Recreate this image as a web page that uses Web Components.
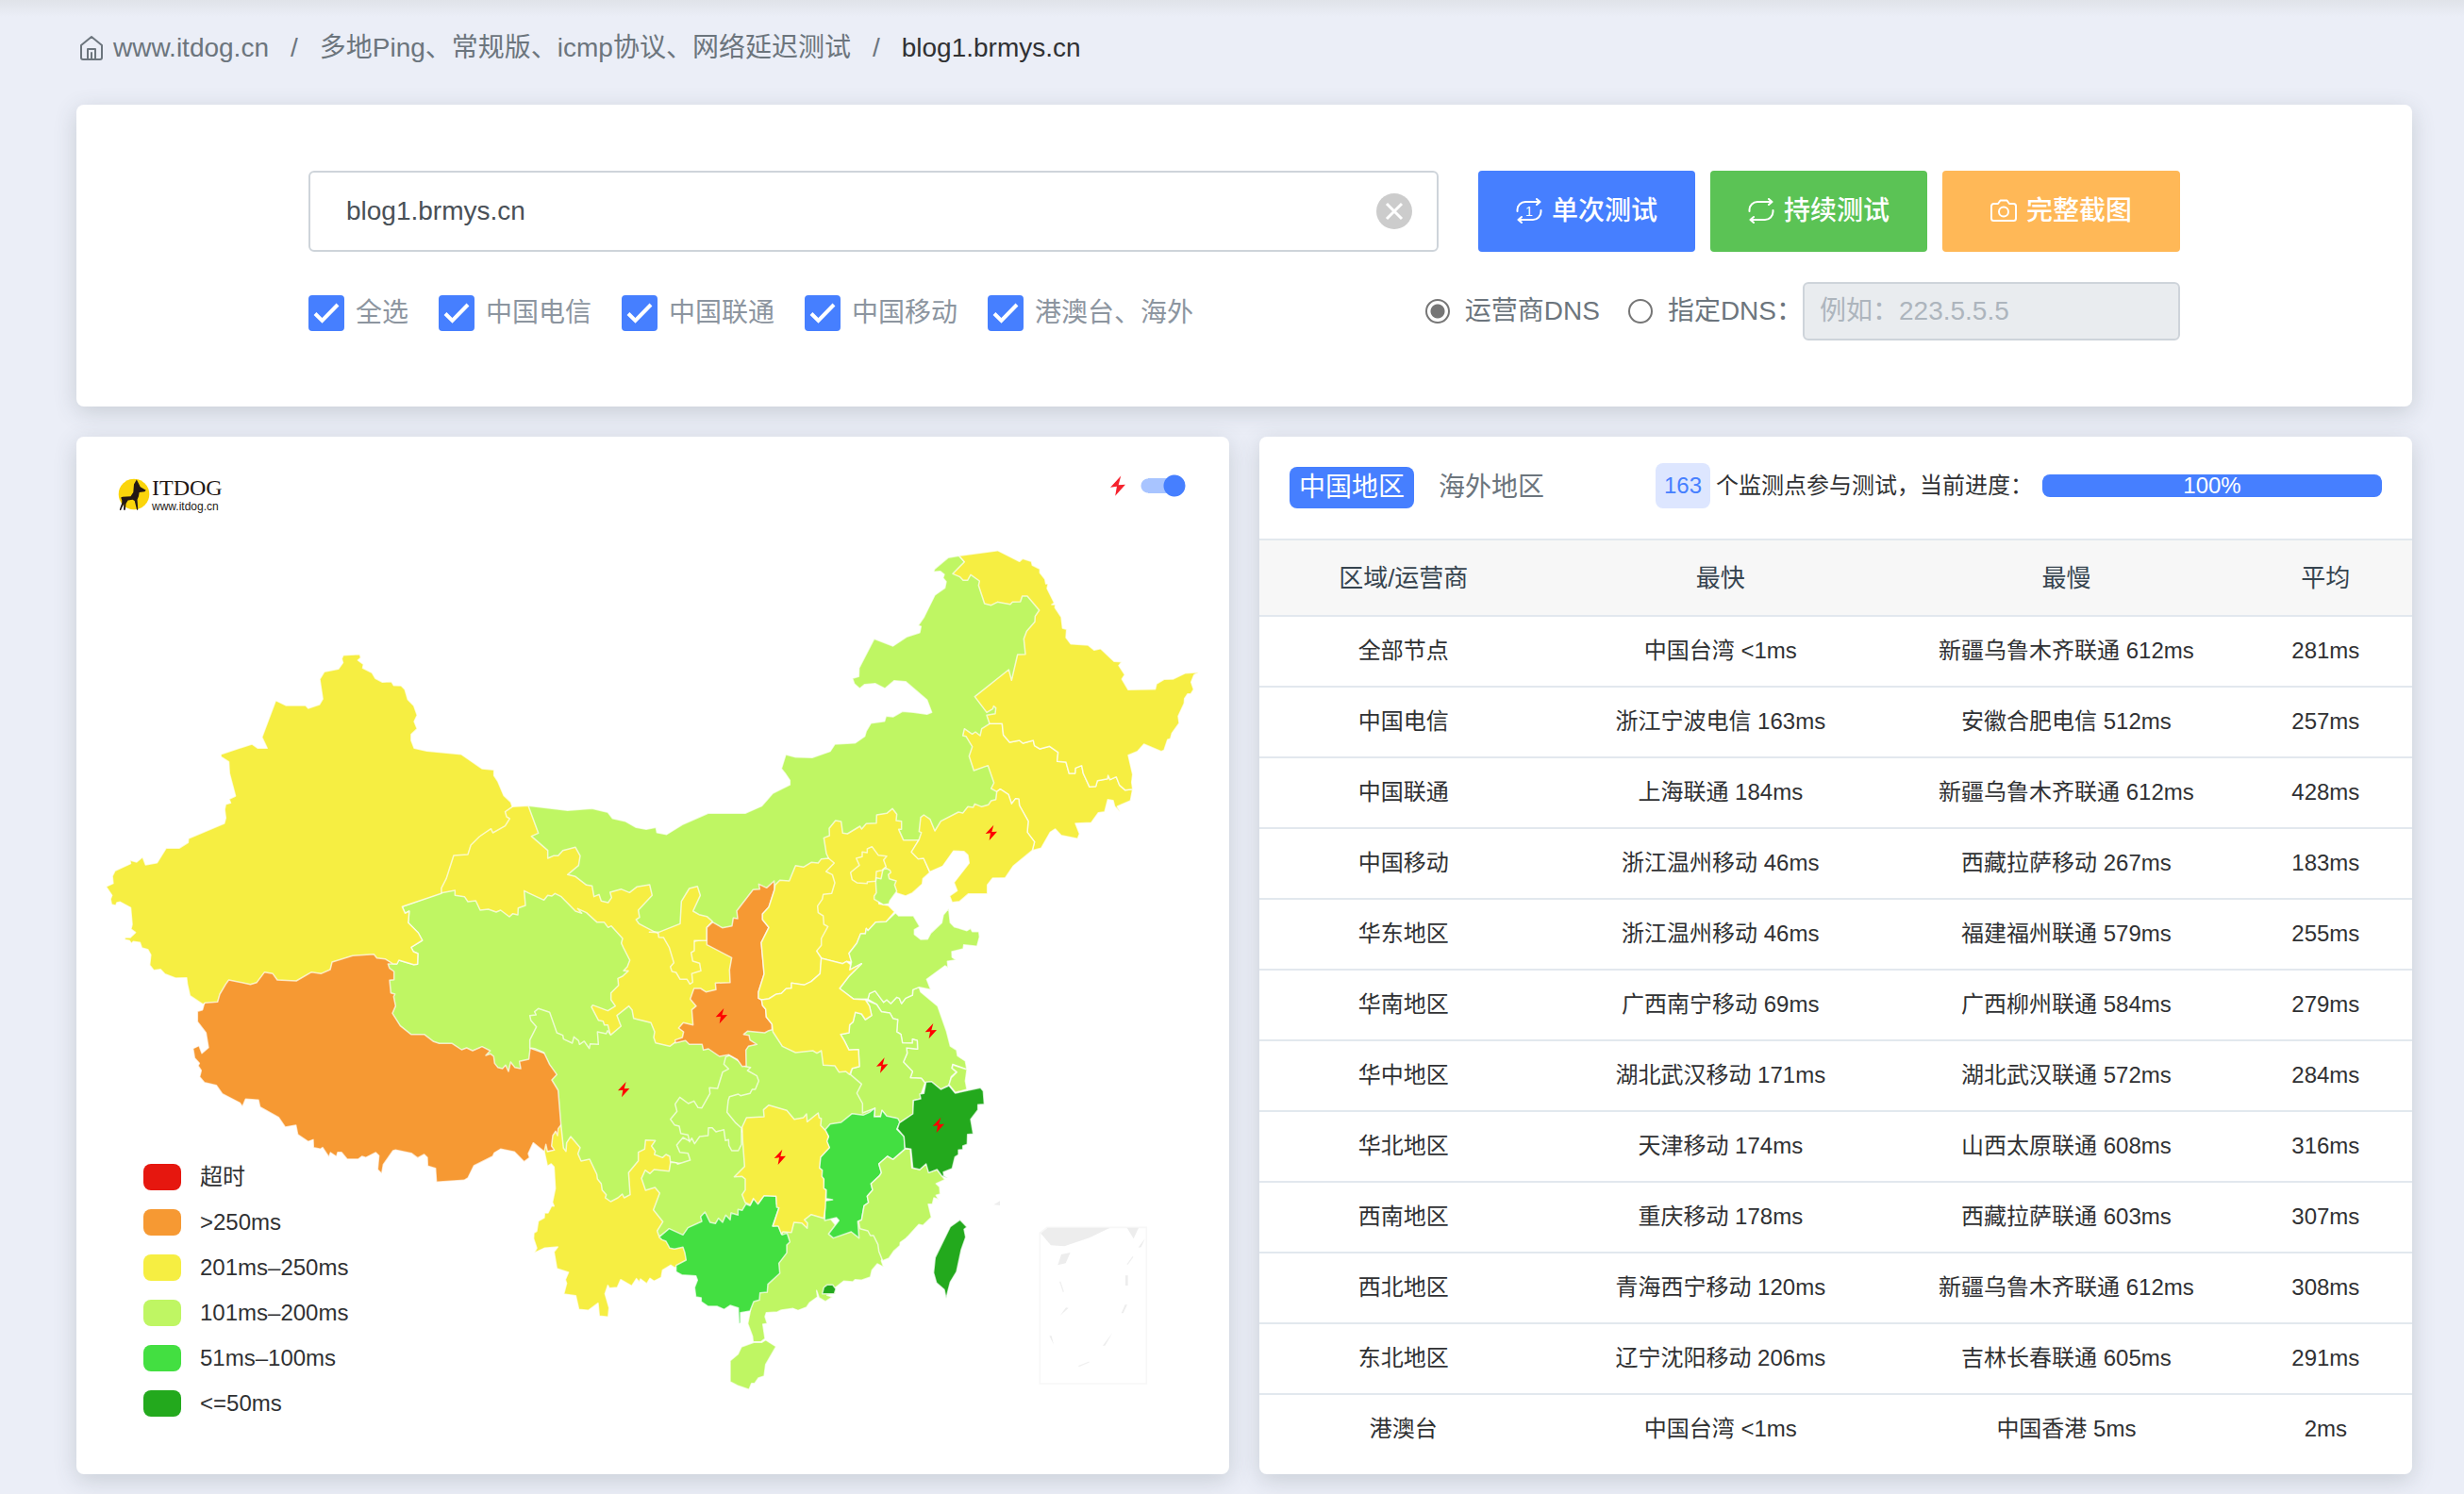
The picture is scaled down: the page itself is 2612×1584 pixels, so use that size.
<!DOCTYPE html>
<html lang="zh-CN">
<head>
<meta charset="utf-8">
<meta name="viewport" content="width=device-width, initial-scale=1">
<title>多地Ping - ITDOG</title>
<style>
    * { box-sizing: border-box; }
    body {
        margin: 0;
        min-height: 100vh;
        background: #ebeef7 linear-gradient(#e0e3e9, #ebeef7) no-repeat 0 0 / 100% 18px;
        font: 24px/32px "Liberation Sans", "Noto Sans CJK SC", sans-serif;
        color: #303133;
        --primary: #467fff;
        --success: #5bc355;
        --warning: #ffb857;
        --muted: #6c757d;
        --line: #e2e8ee;
    }
</style>
</head>
<body>
<ping-page></ping-page>

<script>
const base = `*, :after, :before { box-sizing: border-box; }`;

class UiCard extends HTMLElement {
    connectedCallback() {
        this.attachShadow({ mode: 'open' }).innerHTML = `
            <style>
                ${base}
                :host {
                    display: block;
                    background: #fff;
                    border-radius: 8px;
                    box-shadow: 0 6px 24px rgba(60, 75, 80, 0.2);
                    overflow: hidden;
                }
            </style>
            <slot></slot>`;
    }
}
customElements.define('ui-card', UiCard);

class BreadCrumb extends HTMLElement {
    connectedCallback() {
        this.attachShadow({ mode: 'open' }).innerHTML = `
            <style>
                ${base}
                :host { display: block; font-size: 28px; line-height: 40px; color: var(--muted); }
                ol { display: flex; list-style: none; margin: 0; padding: 0; }
                li { display: flex; align-items: center; }
                li + li::before { content: "/"; padding: 0 23px; color: var(--muted); }
                a { color: inherit; text-decoration: none; display: flex; align-items: center; gap: 10px; }
                svg { width: 26px; height: 28px; fill: none; stroke: currentColor; stroke-width: 2; stroke-linejoin: round; stroke-linecap: round; margin-left: 3px; }
                .active { color: #303133; }
            </style>
            <nav><ol>
                <li><a href="#"><svg viewBox="0 0 26 28"><path d="M2 11 13 2l11 9v13a2 2 0 0 1-2 2H4a2 2 0 0 1-2-2z M9 26V15h8v11 M13 19v7"/></svg>www.itdog.cn</a></li>
                <li><a href="#">多地Ping、常规版、icmp协议、网络延迟测试</a></li>
                <li class="active">blog1.brmys.cn</li>
            </ol></nav>`;
    }
}
customElements.define('bread-crumb', BreadCrumb);

class CheckField extends HTMLElement {
    connectedCallback() {
        this.attachShadow({ mode: 'open' }).innerHTML = `
            <style>
                ${base}
                :host { display: block; }
                label { display: flex; align-items: center; gap: 12px; color: #8c959f; }
                input {
                    appearance: none;
                    width: 38px;
                    height: 38px;
                    margin: 0;
                    border: 2px solid #ced4da;
                    border-radius: 4px;
                }
                .box { display: grid; }
                .box > * { grid-area: 1 / 1; }
                input:checked { background: var(--primary); border-color: var(--primary); }
                svg { width: 38px; height: 38px; fill: none; stroke: #fff; stroke-width: 4; pointer-events: none; }
            </style>
            <label>
                <span class="box">
                    <input type="checkbox" checked>
                    <svg viewBox="0 0 38 38"><path d="M7 19.500 14.500 27 31 10"/></svg>
                </span>
                <slot></slot>
            </label>`;
    }
}
customElements.define('check-field', CheckField);

const icons = {
    once: `<path d="M1.500 14v-1.500a8.500 8.500 0 0 1 8.500-8.500H25 M22 1l3.500 3L22 7 M26.500 13v1.500A8.500 8.500 0 0 1 18 23H3 M6 20l-3.500 3L6 26"/><text x="10" y="19" font-size="14" fill="#fff" stroke="none">1</text>`,
    loop: `<path d="M1.500 14v-1.500a8.500 8.500 0 0 1 8.500-8.500H25 M22 1l3.500 3L22 7 M26.500 13v1.500A8.500 8.500 0 0 1 18 23H3 M6 20l-3.500 3L6 26"/>`,
    camera: `<path d="M3.500 6H8l2.500-3.500h7L20 6h4.500A2.500 2.500 0 0 1 27 8.500v13a2.500 2.500 0 0 1-2.500 2.500h-21A2.500 2.500 0 0 1 1 21.500v-13A2.500 2.500 0 0 1 3.500 6z"/><circle cx="14" cy="14.500" r="5"/>`
};

class ActionButton extends HTMLElement {
    connectedCallback() {
        this.attachShadow({ mode: 'open' }).innerHTML = `
            <style>
                ${base}
                :host { display: block; }
                :host([wide]) button { padding: 0 51px; }
                button {
                    display: flex;
                    align-items: center;
                    gap: 10px;
                    height: 86px;
                    padding: 0 40px;
                    border: 0;
                    border-radius: 4px;
                    background: var(--tone);
                    color: #fff;
                    font: inherit;
                    font-size: 28px;
                    font-weight: 500;
                    white-space: nowrap;
                    cursor: pointer;
                }
                svg { width: 28px; height: 28px; fill: none; stroke: #fff; stroke-width: 2; stroke-linecap: round; stroke-linejoin: round; }
            </style>
            <button type="button"><svg viewBox="0 0 28 28">${icons[this.getAttribute('icon')]}</svg><slot></slot></button>`;
    }
}
customElements.define('action-button', ActionButton);

class SearchPanel extends HTMLElement {
    connectedCallback() {
        this.attachShadow({ mode: 'open' }).innerHTML = `
            <style>
                ${base}
                :host { display: block; padding: 70px 246px; font-size: 28px; line-height: 40px; }
                form { display: flex; flex-direction: column; gap: 32px; }
                .row { display: flex; align-items: center; justify-content: space-between; }
                .host { flex: 1; position: relative; margin-right: 42px; }
                .host input {
                    width: 100%;
                    height: 86px;
                    padding: 0 80px 0 38px;
                    border: 2px solid #ced4da;
                    border-radius: 6px;
                    font: inherit;
                    color: #495057;
                    display: block;
                }
                .clear {
                    position: absolute;
                    right: 28px;
                    top: 24px;
                    width: 38px;
                    height: 38px;
                    border: 0;
                    padding: 0;
                    border-radius: 50%;
                    background: #ccc;
                }
                .clear svg { display: block; width: 38px; height: 38px; stroke: #fff; stroke-width: 3; }
                .buttons { display: flex; gap: 16px; }
                .success { --tone: var(--success); }
                .primary { --tone: var(--primary); }
                .warning { --tone: var(--warning); }
                .checks { display: flex; gap: 32px; padding-top: 4px; }
                .dns { display: flex; align-items: center; color: var(--muted); }
                .dns label { display: flex; align-items: center; gap: 16px; }
                .dns label + label { margin-left: 30px; }
                input[type=radio] {
                    appearance: none;
                    width: 26px;
                    height: 26px;
                    margin: 0;
                    border: 2px solid #767676;
                    border-radius: 50%;
                }
                input[type=radio]:checked { background: radial-gradient(circle, #767676 7px, #fff 8px); }
                .server {
                    width: 400px;
                    height: 62px;
                    padding: 0 16px;
                    border: 2px solid #ced4da;
                    border-radius: 6px;
                    background: #e9ecef;
                    font: inherit;
                }
                .server::placeholder { color: #adb5bd; }
            </style>
            <form>
                <div class="row">
                    <div class="host">
                        <input type="text" aria-label="域名" value="blog1.brmys.cn">
                        <button class="clear" type="button" aria-label="清空"><svg viewBox="0 0 38 38"><path d="M11 11l16 16M27 11L11 27"/></svg></button>
                    </div>
                    <div class="buttons">
                        <action-button class="primary" icon="once">单次测试</action-button>
                        <action-button class="success" icon="loop">持续测试</action-button>
                        <action-button class="warning" icon="camera" wide>完整截图</action-button>
                    </div>
                </div>
                <div class="row">
                    <div class="checks">
                        <check-field>全选</check-field>
                        <check-field>中国电信</check-field>
                        <check-field>中国联通</check-field>
                        <check-field>中国移动</check-field>
                        <check-field>港澳台、海外</check-field>
                    </div>
                    <div class="dns">
                        <label><input type="radio" name="dns" checked>运营商DNS</label>
                        <label><input type="radio" name="dns">指定DNS：</label>
                        <input class="server" type="text" aria-label="指定DNS" placeholder="例如：223.5.5.5" disabled>
                    </div>
                </div>
            </form>`;
    }
}
customElements.define('search-panel', SearchPanel);

// latency levels, slowest first
const levels = {
    timeout: ['#e6170f', '超时'],
    slow: ['#f69933', '>250ms'],
    fair: ['#f6ee42', '201ms–250ms'],
    good: ['#bff663', '101ms–200ms'],
    fast: ['#43df41', '51ms–100ms'],
    best: ['#23a91d', '<=50ms']
};

// each map sheet has its own origin and scale; provinces are listed per sheet
const sheets = {
    mid: 'translate(560 820) scale(.33333)',
    west: 'translate(80 660) scale(.39541 .33333)',
    north: 'translate(880 560) scale(.33333)',
    south: 'translate(700 980) scale(.33333)',
    tibet: 'translate(200 1040) scale(.33333)'
};

// drawn in order, later ones cover the shared borders
const provinces = [
    ['内蒙古', 'mid', 'good', '0,103 125,118 203,112 253,124 268,143 308,152 343,172 375,178 406,172 409,188 440,194 490,163 572,127 690,127 742,104 778,63 832,36 832,22 817,0 805,-15 819,-60 850,-52 903,-50 960,-70 975,-93 1040,-97 1070,-118 1075,-135 1090,-160 1133,-166 1138,-182 1160,-180 1190,-197 1225,-194 1268,-188 1283,-194 1268,-234 1200,-292 1164,-295 1134,-270 1103,-286 1070,-283 1054,-270 1037,-285 1031,-302 1051,-308 1052,-335 1100,-428 1160,-405 1203,-434 1245,-448 1249,-467 1240,-470 1259,-498 1293,-567 1325,-590 1329,-610 1319,-622 1323,-633 1310,-643 1289,-641 1292,-650 1335,-686 1370,-692 1400,-660 1460,-600 1600,-600 1660,-520 1620,-380 1580,-300 1500,-260 1500,-180 1520,-140 1480,-40 1520,50 1500,90 1380,180 1250,260 1100,200 1000,260 900,360 790,420 700,560 560,560 400,540 250,480 60,330 -20,200'],
    ['西藏', 'tibet', 'slow', '50,70 44,92 28,97 28,130 55,165 63,212 42,230 33,206 14,215 19,245 34,262 30,270 40,285 35,305 50,323 88,332 107,359 163,388 171,400 181,376 222,379 227,401 286,434 307,465 341,459 347,489 380,511 396,505 397,530 419,535 426,530 446,560 451,546 470,559 474,545 486,545 504,567 539,567 551,558 563,562 595,546 605,556 601,600 614,613 619,584 650,540 658,538 708,548 728,563 749,552 759,562 760,589 785,596 788,640 876,634 888,627 907,588 967,558 972,547 992,535 1036,544 1067,575 1084,562 1080,549 1096,515 1131,543 1164,540 1200,460 1200,300 1100,180 900,150 700,100 680,-60 600,-110 300,-60 100,-20'],
    ['云南', 'tibet', 'fair', '1131,543 1136,520 1141,543 1163,538 1154,525 1158,492 1167,478 1173,492 1175,470 1184,458 1200,440 1300,500 1500,480 1560,560 1600,640 1600,900 1545,912 1533,904 1507,920 1503,943 1480,955 1467,946 1457,963 1437,948 1433,958 1424,947 1409,970 1374,950 1363,975 1338,977 1333,968 1324,995 1337,1040 1334,1069 1306,1066 1302,1025 1271,1048 1241,1045 1231,1001 1193,996 1202,962 1198,950 1208,927 1171,915 1162,862 1174,846 1131,850 1099,865 1107,850 1097,820 1098,802 1107,796 1112,764 1131,753 1132,738 1143,738 1154,716 1162,716 1157,704 1166,660 1162,592 1153,582 1141,589'],
    ['甘肃', 'mid', 'fair', '0,103 32,190 10,200 62,245 62,270 80,262 95,262 110,245 150,235 165,262 160,293 125,322 150,328 185,355 203,358 209,392 225,385 232,406 254,411 265,395 260,378 295,368 322,379 345,361 386,354 394,388 350,435 354,458 343,465 352,478 398,502 500,540 600,520 700,600 700,660 600,700 560,740 530,820 470,870 440,900 250,880 150,740 200,600 100,480 -60,520 -300,500 -330,380 -300,300 -200,150 -100,120 -51,106 -25,104'],
    ['青海', 'tibet', 'good', '679,-236 688,-215 701,-222 698,-185 730,-153 743,-129 707,-107 715,-93 729,-87 728,-53 716,-52 668,-66 662,-54 634,-54 639,-40 653,-30 653,-4 639,-2 643,38 656,42 652,50 658,80 648,103 673,143 707,170 749,170 779,193 797,199 838,199 868,219 884,213 903,222 933,209 959,222 945,237 960,232 970,240 973,262 983,275 998,279 1008,268 1017,288 1024,258 1037,275 1056,279 1052,256 1082,249 1086,214 1130,230 1300,240 1340,168 1333,140 1322,140 1318,128 1303,125 1281,83 1285,77 1333,95 1357,80 1343,60 1343,38 1367,14 1365,-8 1380,-15 1398,-32 1383,-32 1395,-45 1403,-66 1383,-105 1376,-120 1380,-135 1344,-175 1334,-170 1321,-187 1298,-187 1265,-217 1237,-230 1250,-215 1230,-222 1185,-268 1165,-278 1155,-270 1142,-272 1130,-257 1080,-280 1067,-287 1071,-240 1048,-232 1047,-210 1031,-214 1020,-204 992,-225 978,-219 953,-228 927,-225 913,-255 888,-252 877,-268 847,-272 847,-288 803,-280'],
    ['四川', 'mid', 'good', '5,873 5,848 26,806 8,785 5,770 25,768 20,758 32,748 68,760 91,825 110,833 112,845 140,858 145,838 160,850 163,862 178,852 194,875 197,860 223,862 220,822 248,828 252,818 262,832 295,804 282,770 320,740 330,752 335,779 390,793 402,822 399,840 405,857 450,868 465,857 500,840 600,850 640,900 640,1000 600,1050 540,1110 540,1190 540,1250 452,1235 450,1218 438,1212 427,1222 401,1212 404,1202 392,1185 404,1168 373,1166 370,1195 350,1205 350,1232 319,1270 324,1340 305,1350 299,1338 285,1350 262,1362 245,1350 248,1340 235,1325 232,1305 220,1290 218,1275 195,1227 168,1233 158,1210 165,1190 135,1155 122,1175 120,1202 112,1192 104,1118 95,1008 75,975 91,958 68,926 50,888 20,875'],
    ['新疆', 'west', 'fair', '718,104 762,101 765,112 757,120 772,133 770,145 795,160 804,178 823,190 847,188 853,200 873,201 883,213 891,245 907,265 916,295 908,315 916,338 900,356 900,375 908,400 942,409 1034,419 1090,465 1122,469 1122,487 1132,505 1148,550 1167,571 1171,586 1152,602 1156,618 1164,624 1152,647 1119,669 1114,656 1083,681 1060,708 1052,738 1014,741 994,815 981,845 981,862 876,904 884,925 895,918 892,955 919,987 930,1011 900,1033 906,1047 918,1053 917,1087 907,1088 867,1074 862,1086 850,1085 830,1070 808,1067 800,1055 743,1060 688,1080 683,1104 658,1117 633,1112 592,1140 541,1137 529,1117 507,1112 486,1145 469,1151 411,1137 403,1150 387,1182 381,1207 347,1210 342,1215 307,1187 300,1150 298,1130 268,1131 240,1118 228,1103 210,1106 199,1090 202,1057 194,1040 178,1035 173,1018 155,1015 150,1021 145,1012 132,1009 133,1002 147,1002 161,986 149,975 152,960 148,907 120,889 111,891 108,900 97,897 94,880 98,868 82,840 101,830 99,807 106,790 148,767 146,756 164,762 180,746 188,771 219,764 243,718 278,718 302,700 303,687 399,639 403,622 400,595 403,578 416,574 412,562 429,552 413,480 411,443 390,427 390,419 473,387 489,400 514,400 500,365 537,248 565,264 617,264 624,273 654,261 663,243 655,180 667,157 705,148 717,128 714,115'],
    ['宁夏', 'mid', 'fair', '415,505 483,478 487,407 512,366 538,359 547,388 524,438 543,449 568,455 586,471 568,490 568,532 528,532 528,564 518,570 523,597 545,604 549,628 520,637 523,664 514,670 505,655 483,655 470,633 457,630 452,615 463,602 448,553 430,522 415,521 413,506 385,505'],
    ['贵州', 'mid', 'good', '452,1237 470,1238 475,1243 515,1230 508,1208 482,1205 472,1182 492,1158 510,1168 560,1100 640,1120 700,1150 720,1200 720,1360 690,1420 600,1460 480,1480 415,1470 410,1455 428,1426 398,1388 418,1335 403,1317 373,1326 360,1288 372,1262 387,1273 400,1260 448,1265 452,1240'],
    ['湖北', 'mid', 'good', '700,800 780,800 830,860 940,870 950,920 1020,930 1100,1000 1100,1100 1000,1130 960,1150 900,1130 700,1130 650,1140 600,1060 620,1000 660,880'],
    ['重庆', 'mid', 'good', '628,902 622,925 637,940 618,950 602,1002 576,1000 578,1018 552,1064 540,1063 527,1042 509,1050 482,1030 467,1052 473,1075 452,1100 465,1118 480,1122 485,1145 508,1150 513,1172 520,1160 529,1178 545,1155 572,1152 573,1127 585,1127 597,1140 622,1133 627,1168 637,1165 638,1183 647,1200 668,1200 678,1180 678,1128 660,1112 632,1078 636,1040 640,1028 668,1020 675,1025 705,1018 712,1005 722,1005 733,978 727,962 697,945 707,935 690,932 665,912 640,897'],
    ['陕西', 'mid', 'slow', '782,342 758,364 733,352 736,368 715,370 663,437 666,462 652,460 648,485 617,491 586,473 568,490 568,545 647,586 640,625 642,665 595,667 597,688 565,695 548,684 527,684 515,718 534,740 520,752 524,800 493,793 478,810 494,822 490,840 467,848 468,857 500,850 512,862 553,862 557,880 573,876 608,900 638,895 665,910 680,932 693,931 692,880 700,868 727,862 705,848 702,833 685,830 697,820 752,825 765,818 775,815 775,797 757,775 755,750 745,738 742,720 732,715 732,695 750,638 741,538 765,490 745,465 745,447 765,425 783,370'],
    ['河北', 'mid', 'fair', '955,270 948,255 940,205 958,198 957,175 977,150 995,153 1000,190 1015,192 1055,168 1060,177 1075,160 1107,158 1108,132 1140,127 1158,112 1172,130 1170,150 1187,152 1187,178 1178,178 1193,212 1242,212 1220,250 1240,270 1258,270 1277,315 1255,335 1253,352 1222,380 1200,390 1175,382 1115,345 1115,415 1145,420 1165,440 1138,472 1105,473 1080,500 1075,493 1072,510 1057,510 1045,540 1020,572 1028,600 1012,598 1000,605 932,588 917,565 900,500 900,400 940,330'],
    ['北京', 'mid', 'fair', '1093,233 1113,260 1140,263 1130,275 1138,297 1125,308 1107,312 1105,343 1078,345 1078,350 1045,348 1030,338 1025,315 1053,292 1043,270 1062,265 1062,250 1078,252 1078,240'],
    ['天津', 'mid', 'good', '1135,300 1150,308 1153,315 1145,322 1148,335 1170,342 1165,355 1172,375 1150,405 1147,415 1130,418 1100,400 1100,390 1107,380 1105,345 1107,332 1122,335 1127,310'],
    ['山西', 'mid', 'fair', '785,355 800,340 830,342 850,293 875,298 900,283 922,285 932,272 955,270 973,285 947,312 967,322 975,348 965,382 938,385 935,400 920,422 922,443 938,453 940,480 953,487 932,525 932,547 917,565 932,588 928,637 900,662 877,673 837,667 837,683 820,685 805,700 787,703 765,717 742,720 732,715 732,695 750,638 741,538 765,490 745,465 745,447 765,425 783,370'],
    ['江苏', 'mid', 'good', '1080,718 1085,700 1103,692 1130,728 1140,720 1153,732 1172,712 1180,715 1187,732 1200,715 1222,705 1223,688 1243,680 1248,695 1302,740 1330,820 1342,867 1362,880 1365,898 1390,915 1395,942 1350,925 1347,937 1362,950 1345,965 1338,992 1312,1005 1282,982 1262,985 1250,970 1215,968 1222,948 1193,918 1205,890 1203,873 1238,877 1237,850 1222,845 1222,858 1190,857 1185,830 1172,822 1175,783 1160,780 1150,762 1123,758 1108,735'],
    ['安徽', 'mid', 'good', '1040,760 1060,765 1072,783 1092,770 1085,740 1072,720 1108,735 1123,758 1150,762 1160,780 1175,783 1172,822 1185,830 1190,857 1222,858 1222,845 1237,850 1238,877 1203,873 1205,890 1193,918 1222,948 1215,968 1250,970 1262,985 1250,1018 1248,1035 1225,1040 1225,1083 1180,1112 1170,1097 1140,1092 1125,1072 1122,1090 1100,1092 1103,1065 1063,1080 1063,1050 1045,1017 1060,988 1025,958 1030,938 1053,932 1050,878 1020,880 1005,850 993,830 1020,825 1022,800 1033,790'],
    ['山东', 'mid', 'good', '1168,443 1178,453 1225,453 1245,487 1228,497 1228,512 1248,528 1270,527 1280,508 1315,475 1320,450 1337,430 1342,475 1355,488 1395,500 1407,493 1412,503 1433,503 1435,520 1427,550 1385,545 1383,558 1347,567 1348,585 1360,593 1333,598 1335,618 1325,612 1267,655 1280,688 1243,680 1223,688 1222,705 1200,715 1187,732 1180,715 1172,712 1153,732 1140,720 1130,728 1103,692 1085,700 1080,718 1035,718 990,684 1020,645 1060,605 1022,625 1028,600 1020,572 1045,540 1057,510 1072,510 1075,493 1080,500 1105,473 1138,472'],
    ['河南', 'mid', 'fair', '932,588 1000,605 1012,598 1025,608 1022,625 1060,605 1020,645 990,684 1035,718 1072,720 1085,740 1092,770 1072,783 1060,765 1040,760 1033,790 1022,800 1020,825 993,830 1005,850 1020,880 1050,878 1053,932 1030,938 1022,958 1010,948 988,950 975,930 938,928 932,882 918,890 905,882 850,888 808,868 778,822 775,797 757,775 755,750 745,738 742,720 765,717 787,703 805,700 820,685 837,683 837,667 877,673 900,662 928,637'],
    ['吉林', 'north', 'fair', '427,638 452,655 462,648 477,660 482,638 507,622 547,622 551,658 571,681 602,675 613,684 646,675 650,692 667,702 698,694 725,713 722,742 750,744 760,780 779,780 780,763 800,755 805,780 825,823 845,821 850,803 882,797 884,786 890,800 910,791 920,817 938,833 962,830 955,867 913,885 922,903 905,885 900,866 883,863 873,902 853,905 830,937 780,939 793,972 787,988 735,977 716,957 700,967 671,1018 643,1025 650,998 627,967 630,932 602,882 600,862 590,860 577,877 567,847 541,830 530,838 512,828 521,810 502,755 457,771 442,725 452,695 432,662 422,660'],
    ['黑龙江', 'north', 'fair', '410,88 533,71 602,106 612,97 640,106 643,118 667,130 667,142 683,162 686,177 693,177 690,192 713,238 705,243 716,243 715,253 735,283 739,318 752,322 750,348 765,368 820,372 840,388 860,383 903,424 927,425 918,437 937,466 928,480 948,514 1034,512 1038,495 1062,481 1090,480 1130,461 1172,458 1157,467 1148,490 1156,513 1147,527 1137,527 1127,542 1126,557 1107,598 1110,620 1087,652 1082,670 1073,673 1062,706 1053,710 998,687 977,710 948,722 962,783 959,808 962,830 938,833 920,817 910,791 890,800 884,786 882,797 850,803 845,821 825,823 805,780 800,755 780,763 779,780 760,780 750,744 722,742 725,713 698,694 667,702 650,692 646,675 613,684 602,675 571,681 551,658 547,622 507,622 498,595 525,590 527,572 520,566 517,575 498,586 460,536 568,450 577,484 596,402 621,401 616,352 625,328 651,298 652,280 665,261 627,216 611,216 605,234 580,235 573,242 532,235 512,245 491,240 472,182 475,168 447,148 437,166 423,166 413,155 390,145 427,107'],
    ['辽宁', 'north', 'fair', '258,1030 282,992 290,968 283,965 288,920 298,912 318,926 333,963 352,932 408,903 422,906 438,886 455,888 460,877 482,886 503,880 512,867 527,863 530,838 541,830 567,847 577,877 590,860 600,862 602,882 630,932 627,967 650,998 643,1025 582,1075 557,1112 517,1113 500,1135 500,1163 440,1163 412,1187 388,1190 380,1170 404,1153 394,1127 442,1065 438,1040 425,1028 392,1027 358,1075 317,1093 297,1050 280,1052'],
    ['广东', 'south', 'good', '380,1000 400,930 520,910 560,960 640,930 720,1000 715,1050 703,1070 710,1090 690,1080 673,1100 668,1122 640,1132 620,1130 612,1137 583,1135 557,1155 557,1175 530,1180 548,1185 525,1200 505,1188 497,1165 500,1185 475,1203 465,1218 438,1228 422,1222 385,1227 372,1233 337,1235 333,1248 340,1270 326,1272 333,1318 320,1328 295,1328 293,1310 278,1270 287,1225 250,1200 300,1150 360,1080'],
    ['广西', 'south', 'fast', '-4,995 28,968 72,988 88,965 132,945 128,930 142,915 158,948 175,952 185,935 198,948 208,925 222,940 225,918 247,925 247,907 260,910 272,890 285,895 297,872 312,888 330,862 368,865 370,890 378,900 357,960 375,958 387,988 403,982 412,1010 402,1020 402,1045 377,1078 380,1110 342,1145 340,1170 317,1172 315,1195 297,1200 285,1230 255,1235 255,1268 250,1270 248,1220 222,1212 203,1225 180,1215 152,1215 130,1200 130,1188 113,1185 109,1155 118,1132 113,1118 68,1115 50,1105 50,1085 82,1068 78,1045 72,1027 45,1033 30,1030 18,1008 5,1003'],
    ['江西', 'south', 'fast', '523,655 540,635 575,630 610,602 645,607 665,598 682,585 680,612 700,612 705,592 720,610 755,617 762,630 752,652 775,675 778,715 740,748 722,738 695,762 703,790 697,800 670,825 675,845 658,865 662,885 648,895 640,940 628,945 632,998 607,978 550,998 535,985 568,942 560,933 523,942 523,880 548,876 527,872 527,845 518,840 520,812 510,800 513,783 505,775 508,742 537,710 528,690 535,675'],
    ['湖南', 'mid', 'fair', '680,1125 694,1095 750,1092 748,1070 765,1055 822,1072 846,1100 875,1095 885,1083 887,1108 922,1080 925,1095 932,1098 930,1120 947,1138 955,1155 950,1170 958,1190 930,1220 926,1255 935,1262 934,1282 940,1290 940,1320 947,1325 945,1380 940,1415 900,1403 878,1420 888,1430 887,1447 870,1430 845,1428 837,1460 810,1458 805,1465 795,1440 778,1440 797,1382 790,1380 788,1345 750,1343 730,1370 716,1352 706,1372 690,1365 680,1340 690,1325 690,1290 680,1282 655,1283 688,1250 682,1170'],
    ['福建', 'south', 'good', '778,715 795,715 800,775 825,780 845,762 855,788 880,780 895,800 905,812 877,825 888,835 890,858 877,862 885,875 870,870 865,890 852,890 862,932 835,958 822,955 790,990 780,1000 763,1012 762,1022 742,1040 727,1062 707,1070 695,1040 692,1018 678,990 668,990 660,975 635,968 630,945 640,940 648,895 662,885 658,865 675,845 670,825 697,800 703,790 695,762 722,738 740,748'],
    ['浙江', 'south', 'best', '845,502 862,500 892,525 918,513 938,537 1018,520 1027,530 1030,572 1010,574 1010,590 987,620 995,667 977,668 976,700 962,705 962,716 948,718 948,733 937,740 928,777 900,788 902,800 915,808 895,800 880,780 853,790 845,762 825,780 803,775 797,715 778,712 775,675 754,650 760,632 803,603 805,560 828,555 825,540 838,538'],
    ['上海', 'south', 'good', '975,462 930,447 928,458 943,470 925,488 918,510 938,535 975,525 970,498'],
    ['海南', 'south', 'good', '335,1322 368,1343 335,1400 330,1437 312,1443 300,1460 290,1460 282,1480 245,1467 222,1455 222,1388 247,1367 258,1344 297,1330 322,1330'],
    ['台湾', 'south', 'best', '953,940 975,963 966,970 971,995 957,1035 942,1105 922,1138 915,1165 909,1190 903,1162 878,1140 869,1108 874,1060 922,962'],
    ['香港', 'south', 'best', '520,1155 530,1147 548,1147 558,1160 553,1175 515,1175']
];

// fastest nodes, on the mid sheet
const bolts = [[1472, 188], [614, 771], [303, 1005], [1125, 928], [1280, 819], [1304, 1118], [800, 1220]];

class PingMap extends HTMLElement {
    connectedCallback() {
        const shapes = provinces.map(([name, sheet, level, points]) =>
            `<polygon transform="${sheets[sheet]}" fill="${levels[level][0]}" points="${points}"/>`).join('');
        const marks = bolts.map(([x, y]) =>
            `<path transform="translate(${x} ${y})" d="M8-24-18 4-2 2-6 25 19-3 2-2z"/>`).join('');
        const legend = Object.values(levels).map(([color, text]) =>
            `<li><i style="background:${color}"></i>${text.replace('<', '&lt;')}</li>`).join('');

        this.attachShadow({ mode: 'open' }).innerHTML = `
            <style>
                ${base}
                :host { display: block; position: relative; }
                .china { display: block; width: 100%; }
                polygon { stroke: rgba(255, 255, 255, 0.7); stroke-width: 1.5; vector-effect: non-scaling-stroke; stroke-linejoin: round; }
                .bar {
                    position: absolute;
                    top: 36px;
                    left: 44px;
                    right: 46px;
                    display: flex;
                    justify-content: space-between;
                    align-items: flex-start;
                }
                .logo { display: flex; align-items: center; gap: 2px; padding-top: 5px; color: #231815; }
                .logo svg { width: 34px; height: 34px; }
                .logo b { display: block; font: 24px/26px "Liberation Serif", serif; }
                .logo small { display: block; font: 12px/14px "Liberation Sans", sans-serif; }
                .toggle { display: flex; align-items: center; gap: 16px; height: 32px; }
                .toggle svg { width: 16px; height: 26px; fill: #f5222d; }
                input {
                    appearance: none;
                    width: 48px;
                    height: 24px;
                    margin: 0;
                    border-radius: 12px;
                    background:
                        radial-gradient(circle at 36px 12px, var(--primary) 11px, transparent 12px),
                        linear-gradient(#a8c4ff, #a8c4ff) no-repeat 8px 4px / 32px 16px,
                        radial-gradient(circle at 8px 12px, #a8c4ff 7px, transparent 8px);
                }
                ul { position: absolute; left: 71px; bottom: 59px; margin: 0; padding: 0; list-style: none; display: grid; gap: 16px; }
                li { display: flex; align-items: center; gap: 20px; }
                i { width: 40px; height: 28px; border-radius: 8px; }
            </style>
            <svg class="china" viewBox="81 463 1222 1100">
                ${shapes}
                <g transform="${sheets.mid}" fill="#f00">${marks}</g>
                <g transform="translate(1060 1260) scale(.33333)">
                    <path d="M150 124H466V621H127V142z" fill="none" stroke="#f7f7f7" stroke-width="5"/>
                    <path d="M152 125H350L285 157 205 184 162 181 130 143z M404 125H441L425 160z M195 210 224 204 209 238 184 244z M399 277h8v32h-8z M398 370h7l-13 27h-6z M157 469h7l7 28z M440 188 462 158 449 187z M327 500 358 459 334 500z M191 405 210 379 218 380z" fill="#ededed"/>
                    <path d="M191 296 202 329 M405 242 423 217 M250 566 284 552" stroke="#f0f0f0" stroke-width="4"/>
                    <path d="M-20 52 0 40V54z" fill="#eee"/>
                </g>
            </svg>
            <div class="bar">
                <div class="logo">
                    <svg viewBox="0 0 96 96"><circle cx="48" cy="48" r="46" fill="#fbd50b"/><path fill="#231815" d="M56 4 64 20 67 26 84 36 80 40 64 42 62 54 58 64 60 94 57 96 50 68 44 64 30 66 24 76 22 95H17L18 76 11 90 8 98 5 94 12 74 12 66 9 58 14 56 38 54 46 42 48 18z"/></svg>
                    <div><b>ITDOG</b><small>www.itdog.cn</small></div>
                </div>
                <label class="toggle" aria-label="最快节点">
                    <svg viewBox="-18 -25 37 50"><path d="M8-24-18 4-2 2-6 25 19-3 2-2z"/></svg>
                    <input type="checkbox" checked>
                </label>
            </div>
            <ul>${legend}</ul>`;
    }
}
customElements.define('ping-map', PingMap);

const rows = [
    ['全部节点', '中国台湾 <1ms', '新疆乌鲁木齐联通 612ms', '281ms'],
    ['中国电信', '浙江宁波电信 163ms', '安徽合肥电信 512ms', '257ms'],
    ['中国联通', '上海联通 184ms', '新疆乌鲁木齐联通 612ms', '428ms'],
    ['中国移动', '浙江温州移动 46ms', '西藏拉萨移动 267ms', '183ms'],
    ['华东地区', '浙江温州移动 46ms', '福建福州联通 579ms', '255ms'],
    ['华南地区', '广西南宁移动 69ms', '广西柳州联通 584ms', '279ms'],
    ['华中地区', '湖北武汉移动 171ms', '湖北武汉联通 572ms', '284ms'],
    ['华北地区', '天津移动 174ms', '山西太原联通 608ms', '316ms'],
    ['西南地区', '重庆移动 178ms', '西藏拉萨联通 603ms', '307ms'],
    ['西北地区', '青海西宁移动 120ms', '新疆乌鲁木齐联通 612ms', '308ms'],
    ['东北地区', '辽宁沈阳移动 206ms', '吉林长春联通 605ms', '291ms'],
    ['港澳台', '中国台湾 <1ms', '中国香港 5ms', '2ms']
];

class PingResult extends HTMLElement {
    connectedCallback() {
        const body = rows.map(r =>
            `<tr>${r.map(c => `<td>${c.replace('<', '&lt;')}</td>`).join('')}</tr>`).join('');

        this.attachShadow({ mode: 'open' }).innerHTML = `
            <style>
                ${base}
                :host { display: block; }
                header { display: flex; align-items: center; height: 108px; padding: 0 32px 4px; }
                .tabs { display: flex; gap: 16px; padding-top: 4px; }
                .tabs button {
                    height: 44px;
                    padding: 0 10px;
                    border: 0;
                    border-radius: 8px;
                    background: none;
                    color: var(--muted);
                    font: inherit;
                    font-size: 28px;
                    line-height: 44px;
                }
                .tabs .active { background: var(--primary); color: #fff; }
                .progress { display: flex; align-items: center; margin-left: auto; }
                .count { padding: 8px 9px; margin-right: 6px; border-radius: 8px; background: #dde6ff; color: var(--primary); }
                .meter { width: 360px; height: 24px; margin-left: 10px; border-radius: 8px; background: var(--primary); color: #fff; text-align: center; line-height: 24px; }
                table { width: 100%; border-collapse: collapse; table-layout: fixed; text-align: center; }
                th { height: 81px; padding: 0; background: #f7f7f7; border: solid var(--line); border-width: 2px 0; font-size: 26px; font-weight: 400; color: #36444f; }
                td { height: 75px; padding: 0 0 2px; border-bottom: 2px solid var(--line); }
                tr:last-child td { border-bottom: 0; }
            </style>
            <header>
                <div class="tabs">
                    <button class="active" type="button">中国地区</button>
                    <button type="button">海外地区</button>
                </div>
                <div class="progress">
                    <span class="count">163</span>
                    <span>个监测点参与测试，当前进度：</span>
                    <div class="meter">100%</div>
                </div>
            </header>
            <table>
                <colgroup><col style="width:25%"><col style="width:30%"><col style="width:30%"><col style="width:15%"></colgroup>
                <thead><tr><th>区域/运营商</th><th>最快</th><th>最慢</th><th>平均</th></tr></thead>
                <tbody>${body}</tbody>
            </table>`;
    }
}
customElements.define('ping-result', PingResult);

class PingPage extends HTMLElement {
    connectedCallback() {
        this.attachShadow({ mode: 'open' }).innerHTML = `
            <style>
                ${base}
                :host { display: block; padding: 31px 55px 20px 81px; }
                bread-crumb { margin-bottom: 40px; }
                .grid { display: grid; grid-template-columns: 1fr 1fr; gap: 32px; margin-top: 32px; }
            </style>
            <bread-crumb></bread-crumb>
            <ui-card><search-panel></search-panel></ui-card>
            <div class="grid">
                <ui-card><ping-map></ping-map></ui-card>
                <ui-card><ping-result></ping-result></ui-card>
            </div>`;
    }
}
customElements.define('ping-page', PingPage);
</script>
</body>
</html>
